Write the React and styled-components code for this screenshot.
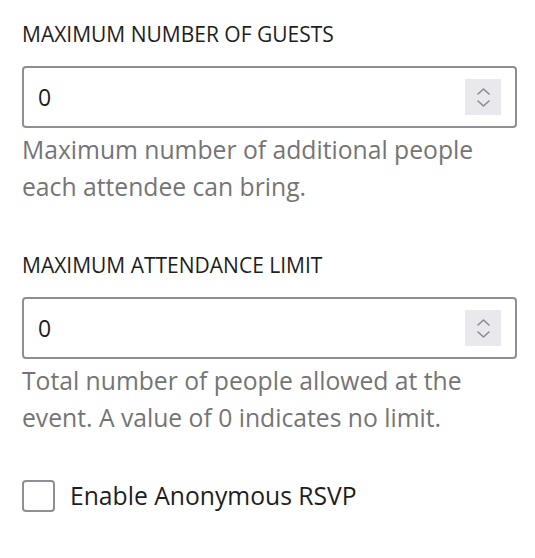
import React from "react";
import styled, { createGlobalStyle } from "styled-components";

const GlobalStyle = createGlobalStyle`
  html, body {
    margin: 0;
    padding: 0;
    background: #ffffff;
  }
  body {
    font-family: "Open Sans", "Noto Sans", "Liberation Sans", sans-serif;
    -webkit-font-smoothing: antialiased;
  }
`;

// Colors
const textDark = '#1e1e1e';
const textMuted = '#757575';
const borderGray = '#8c8f94';

const Panel = styled.div`
  width: 535px;
  box-sizing: border-box;
  padding: 20px 18px 40px 22px;
  display: flex;
  flex-direction: column;
  gap: 46px;
`;

const Field = styled.div`
  display: flex;
  flex-direction: column;
`;

const Label = styled.label`
  font-size: 21px;
  line-height: 28px;
  text-transform: uppercase;
  color: ${textDark};
  margin-bottom: 18px;
`;

const InputBox = styled.div`
  display: flex;
  align-items: center;
  height: 62px;
  box-sizing: border-box;
  border: 2px solid ${borderGray};
  border-radius: 4px;
  padding: 0 14px 0 14px;
  background: #fff;
`;

const Value = styled.input`
  flex: 1;
  min-width: 0;
  border: none;
  outline: none;
  background: transparent;
  font-family: inherit;
  font-size: 23px;
  color: ${textDark};
  padding: 0;
`;

const Spinner = styled.span`
  width: 36px;
  height: 36px;
  background: #e9e9ed;
  display: flex;
  flex-direction: column;
  align-items: center;
  justify-content: center;
  gap: 5px;
`;

const Help = styled.p`
  margin: 3px 0 0;
  font-size: 24.7px;
  line-height: 37px;
  color: ${textMuted};
`;

const CheckRow = styled.label`
  display: flex;
  align-items: center;
  gap: 15px;
  margin-top: -2px;
  font-size: 24.7px;
  line-height: 32px;
  color: ${textDark};
`;

const Box = styled.span`
  width: 33px;
  height: 32px;
  box-sizing: border-box;
  border: 2px solid ${borderGray};
  border-radius: 4px;
  background: #fff;
`;

const Chevron = ({ up }) => (
  <svg width="13" height="7" viewBox="0 0 13 7">
    <path
      d={up ? "M1 6 L6.5 1 L12 6" : "M1 1 L6.5 6 L12 1"}
      fill="none"
      stroke="#8a8a96"
      strokeWidth="1.6"
      strokeLinecap="round"
      strokeLinejoin="round"
    />
  </svg>
);

const NumberField = ({ label, value, help }) => (
  <Field>
    <Label>{label}</Label>
    <InputBox>
      <Value type="text" value={value} readOnly />
      <Spinner>
        <Chevron up />
        <Chevron />
      </Spinner>
    </InputBox>
    <Help>{help}</Help>
  </Field>
);

export default function App() {
  return (
    <>
      <GlobalStyle />
      <Panel>
        <NumberField
          label="Maximum number of guests"
          value="0"
          help="Maximum number of additional people each attendee can bring."
        />
        <NumberField
          label="Maximum attendance limit"
          value="0"
          help="Total number of people allowed at the event. A value of 0 indicates no limit."
        />
        <CheckRow>
          <Box />
          Enable Anonymous RSVP
        </CheckRow>
      </Panel>
    </>
  );
}
